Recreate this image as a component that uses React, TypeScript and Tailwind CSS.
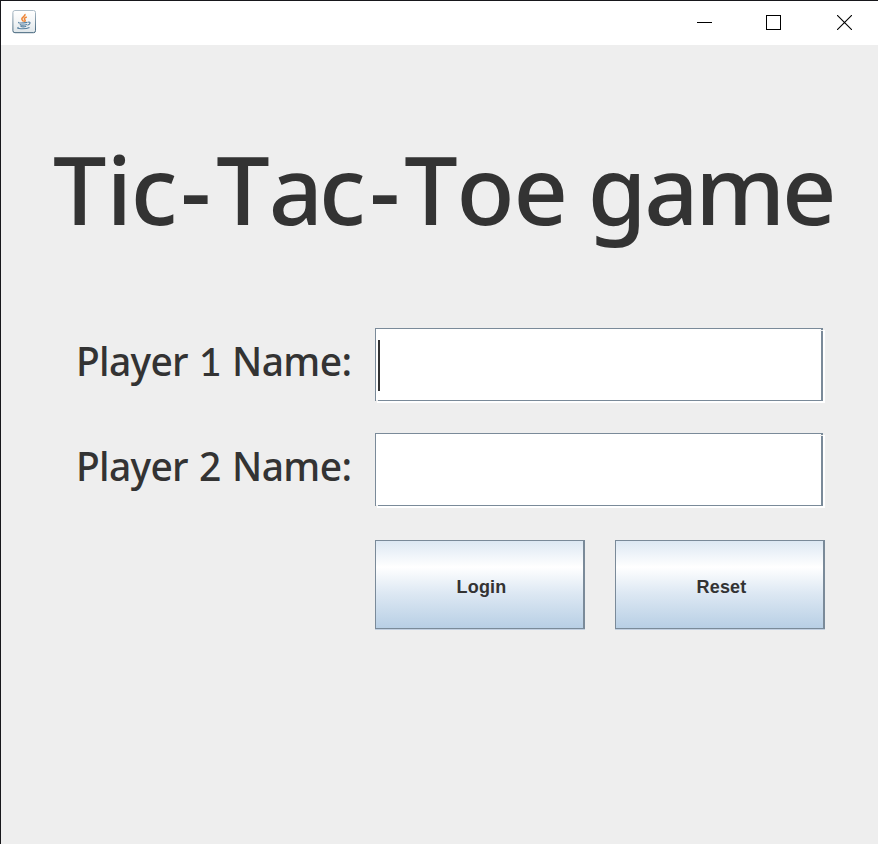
function JavaIcon() {
  return (
    <svg width="24" height="24" viewBox="0 0 24 24" fill="none">
      <defs>
        <linearGradient id="frame" x1="0" y1="0" x2="0" y2="1">
          <stop offset="0" stopColor="#aebdc8" />
          <stop offset="1" stopColor="#3f6178" />
        </linearGradient>
        <linearGradient id="face" x1="0" y1="0" x2="0" y2="1">
          <stop offset="0" stopColor="#ffffff" />
          <stop offset="0.5" stopColor="#f3f5f6" />
          <stop offset="1" stopColor="#dfe6ea" />
        </linearGradient>
      </defs>
      <rect x="1.5" y="0.5" width="22.6" height="22.2" rx="2" fill="url(#face)" stroke="url(#frame)" transform="translate(-0.6 0)" />
      <path d="M13 4c.8 2.2-3.5 3.2-3.2 5 .1 1 1.4 1.6 1.8 2.6M14.800 7c-2.600.7-3 1.800-1.900 2.900.6.7.2 1.300-.6 1.900" stroke="#ee8434" strokeWidth="1.5" />
      <path d="M7 12.300c-1.800.8 2.500 1 8.500.1M7.800 14.400c1.500.8 5 .8 7.200.1M8.500 16.300c1.500.7 4 .7 5.700 0M16 12.200c3-.9 2.600 2.200-.6 3M6.500 17.300c-4 1.600 7 2.300 11 .2" stroke="#557f9f" strokeWidth="1.1" />
    </svg>
  );
}

function TitleBar() {
  return (
    <header className="flex h-11 shrink-0 items-start justify-between bg-white pt-[9px] pl-[11px]">
      <JavaIcon />
      <div className="flex items-start pt-[5px] pr-[26px]">
        <svg className="mr-[54px]" width="15" height="15" shapeRendering="crispEdges">
          <path d="M0 7.5H15" stroke="#000" />
        </svg>
        <svg className="mr-[56px]" width="15" height="15" shapeRendering="crispEdges">
          <rect x="0.5" y="0.5" width="14" height="14" fill="none" stroke="#000" />
        </svg>
        <svg width="15" height="15">
          <path d="M0 0 15 15M15 0 0 15" stroke="#000" strokeWidth="1.1" />
        </svg>
      </div>
    </header>
  );
}

function Field({ caret = false }: { caret?: boolean }) {
  return (
    <div className="relative flex h-[73px] w-[448px] border border-r-2 border-[#7a8a99] bg-white pt-[11px] pl-[2px] shadow-[2px_2px_0_#ffffff]">
      {caret && <span className="h-[51px] w-[2px] bg-[#333333]" />}
      <span className="absolute top-[1px] -right-[2px] h-px w-[3px] bg-[#eeeeee]" />
      <span className="absolute -bottom-px left-0 h-px w-[2px] bg-[#eeeeee]" />
    </div>
  );
}

function Label({ n }: { n: number }) {
  return (
    <label className="flex w-[299px] pt-[6px] text-[39px] leading-[54px] font-medium whitespace-nowrap [font-kerning:none]">
      <span className="w-[123px] tracking-[-0.7px]">Player</span>
      <span className={n === 1 ? "w-[33px] font-['Lato',sans-serif]" : "w-[33px]"}>{n}</span>
      <span className="tracking-[-0.6px]">Name:</span>
    </label>
  );
}

function Button({ text }: { text: string }) {
  return (
    <div className="h-[90px] w-[210px] border-b border-[#c3d0e0]">
      <button className="block h-[89px] w-[210px] border border-r-2 border-[#7a8a99] bg-[linear-gradient(#dde8f3_0%,#ffffff_30%,#dde8f3_60%,#b8cfe5_100%)] pt-[6px] pl-[4px] font-['Liberation_Sans',sans-serif] text-[18px] font-bold tracking-[0.2px]">
        {text}
      </button>
    </div>
  );
}

export default function App() {
  return (
    <div className="flex h-[844px] w-[878px] flex-col overflow-hidden border-t border-l border-[#17171b] bg-[#eeeeee] font-['Noto_Sans',sans-serif] text-[#333333]">
      <TitleBar />
      <main className="flex flex-col">
        <h1 className="h-[283px] pt-[78px] pl-[52px] text-[95px] leading-[130px] font-medium whitespace-nowrap [font-kerning:none]">
          <span>T</span>
          <span className="tracking-[-1.2px]">i</span>
          <span className="tracking-[2.9px]">c</span>
          <span className="tracking-[5.4px]">-</span>
          <span className="tracking-[-1px]">T</span>
          <span className="tracking-[-4px]">a</span>
          <span className="tracking-[3.7px]">c</span>
          <span className="tracking-[4.3px]">-</span>
          <span className="tracking-[-1px]">Toe</span>
          <span className="tracking-[-4.2px]"> </span>
          <span className="tracking-[-2.3px]">g</span>
          <span className="tracking-[-3.3px]">ame</span>
        </h1>
        <div className="flex h-[105px] pl-[75px]">
          <Label n={1} />
          <Field caret />
        </div>
        <div className="flex h-[107px] pl-[75px]">
          <Label n={2} />
          <Field />
        </div>
        <div className="flex gap-[30px] pl-[374px]">
          <Button text="Login" />
          <Button text="Reset" />
        </div>
      </main>
    </div>
  );
}
